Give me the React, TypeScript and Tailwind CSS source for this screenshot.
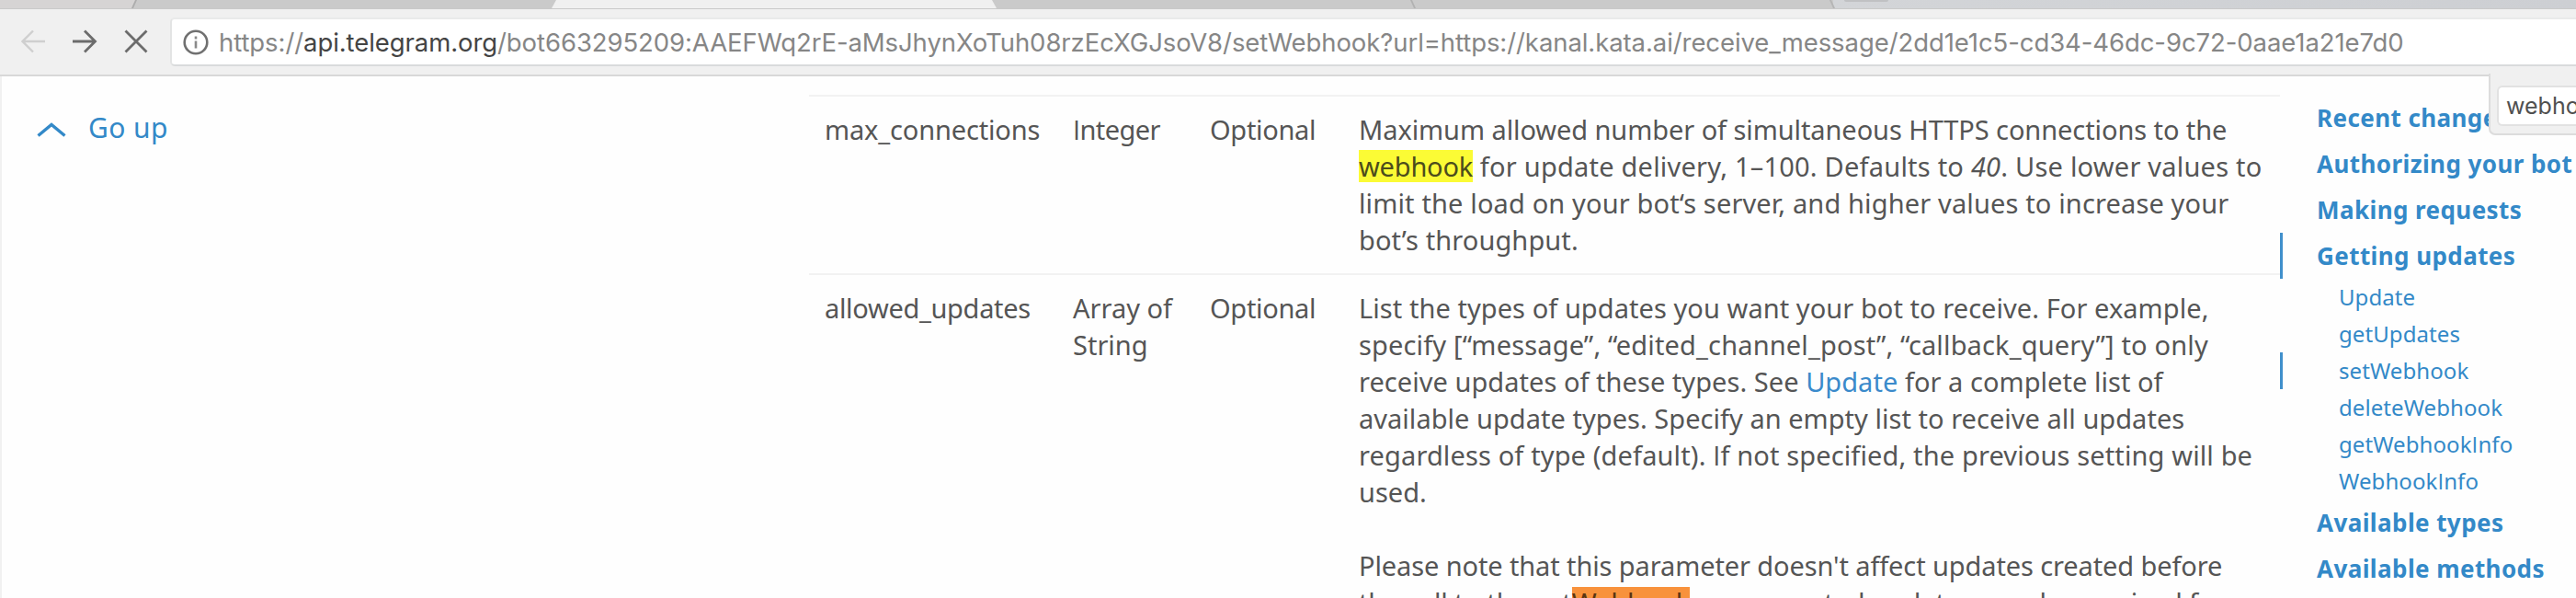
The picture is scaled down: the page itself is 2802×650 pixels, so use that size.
import React from "react";

const I = () => <span className="font-['Open_Sans',sans-serif]">I</span>;

function TabStrip() {
  return (
    <div className="flex h-[9px] shrink-0 bg-[#cacaca]">
      <div className="w-[148px] bg-[#d6d4d4] [clip-path:polygon(0_0,100%_0,144px_100%,0_100%)]" />
      <div className="-ml-[3px] w-[2px] -skew-x-[24deg] bg-[#adadad]" />
      <div className="w-[453px]" />
      <div className="w-[484px] bg-[#f0f0f0] [clip-path:polygon(5px_0,479px_0,100%_100%,0_100%)]" />
      <div className="w-[452px]" />
      <div className="w-[2px] skew-x-[24deg] bg-[#b2b2b2]" />
      <div className="w-[454px]" />
      <div className="w-[2px] skew-x-[24deg] bg-[#b5b5b5]" />
      <div className="flex flex-1 bg-linear-to-r from-[#d3d5d8] to-[#cdcfd3] pl-[12px]">
        <div className="h-[2px] w-[48px] rounded-b bg-[#c0c1c3]" />
      </div>
    </div>
  );
}

function Toolbar() {
  return (
    <div className="flex h-[74px] shrink-0 items-start border-t border-b-2 border-t-[#c9c9c9] border-b-[#d8d8d8] bg-[#f0f0f0]">
      <div className="flex w-[185px] items-center pt-[22px] pl-[22px]">
        <svg width="28" height="26" viewBox="0 0 28 26" fill="none" stroke="#cfcfcf" strokeWidth="2.4">
          <path d="M27 13H3M14 1.5 2.5 13 14 24.5" />
        </svg>
        <svg className="ml-[28px]" width="28" height="26" viewBox="0 0 28 26" fill="none" stroke="#6c6c6c" strokeWidth="2.8">
          <path d="M1 13H25M14 1.5 25.5 13 14 24.5" />
        </svg>
        <svg className="ml-[29px]" width="26" height="26" viewBox="0 0 26 26" fill="none" stroke="#6c6c6c" strokeWidth="2.8">
          <path d="M1.5 1.5 24.5 24.5M24.5 1.5 1.5 24.5" />
        </svg>
      </div>
      <div className="mt-[9px] flex h-[53px] flex-1 items-center rounded-l-[5px] border-y-2 border-l-2 border-t-[#e9eaea] border-b-[#d9dbdc] border-l-[#e3e4e4] bg-white pl-[12px]">
        <svg width="28" height="28" viewBox="0 0 28 28" fill="none" stroke="#707070" strokeWidth="2.6">
          <circle cx="14" cy="14" r="12.3" />
          <path d="M14 12.5V20.5M14 7.5V10.5" stroke="#8a8a8a" />
        </svg>
        <div className="ml-[11px] font-['Inter',sans-serif] text-[27.5px] leading-[40px] tracking-[-0.08px] whitespace-nowrap text-[#868686]">
          https://<span className="text-[#444]">api.telegram.org</span>
          /bot663295209:AAEFWq2rE-aMsJhynXoTuh08rzEcXGJsoV8/setWebhook?url=https://kanal.kata.ai/receive_message/2dd1e1c5-cd34-46dc-9c72-0aae1a21e7d0
        </div>
      </div>
    </div>
  );
}

function FindBar() {
  return (
    <div className="absolute top-[80px] right-0 h-[67px] w-[95px] rounded-bl-[7px] border-b-2 border-l-2 border-[#dcdcdc] bg-[#f0f0f0] pt-[13px] pl-[7px]">
      <div className="h-[44px] overflow-hidden rounded-l-[6px] border-y-2 border-l-2 border-[#e2e2e2] bg-white pl-[8px] font-['Inter',sans-serif] text-[25px] leading-[41px] whitespace-nowrap text-[#505050]">
        webhook
      </div>
    </div>
  );
}

function ParamRow({ name, type, children }: { name: React.ReactNode; type: React.ReactNode; children: React.ReactNode }) {
  return (
    <div className="flex border-t-2 border-[#f2f2f2] pt-[16px] pb-[16px] pl-[17px]">
      <div className="w-[270px]">{name}</div>
      <div className="w-[149px]">{type}</div>
      <div className="w-[162px] tracking-[-0.3px]">Optional</div>
      <div className="whitespace-nowrap">{children}</div>
    </div>
  );
}

function Params() {
  return (
    <div className="mt-[20px] w-[1600px] shrink-0 text-[29px] leading-[40px] text-[#555]">
      <ParamRow
        name={<span className="tracking-[-0.15px]">max_connections</span>}
        type={<span className="tracking-[-0.6px]"><I />nteger</span>}
      >
        <div className="tracking-[-0.08px]">Maximum allowed number of simultaneous HTTPS connections to the</div>
        <div className="tracking-[0.22px]">
          <mark className="mt-[2px] inline-block h-[35px] bg-[#fbfb35] align-top leading-[36px] tracking-[-0.2px] text-[#4c4c1c]">webhook</mark> for update delivery, 1–100. Defaults to <em>40</em>. Use lower values to
        </div>
        <div className="tracking-[0.14px]">limit the load on your bot‘s server, and higher values to increase your</div>
        <div className="tracking-[0.1px]">bot’s throughput.</div>
      </ParamRow>
      <ParamRow
        name={<span className="tracking-[-0.32px]">allowed_updates</span>}
        type={<>Array of<br />String</>}
      >
        <div className="tracking-[0.06px]">List the types of updates you want your bot to receive. For example,</div>
        <div className="tracking-[0.15px]">specify [“message”, “edited_channel_post”, “callback_query”] to only</div>
        <div className="tracking-[0.04px]">receive updates of these types. See <a className="text-[#3a8acb]">Update</a> for a complete list of</div>
        <div className="tracking-[0.03px]">available update types. Specify an empty list to receive all updates</div>
        <div className="tracking-[0.13px]">regardless of type (default). <I />f not specified, the previous setting will be</div>
        <div>used.</div>
        <div className="mt-[40px] tracking-[-0.11px]">Please note that this parameter doesn't affect updates created before</div>
        <div className="tracking-[-0.1px]">
          the call to the set<mark className="mt-[3px] inline-block h-[35px] bg-[#f8923c] align-top leading-[34px] text-[#5a3512]">Webhook</mark>, so unwanted updates may be received for a
        </div>
      </ParamRow>
    </div>
  );
}

type Entry = { label: React.ReactNode; sub?: boolean; active?: boolean };

const entries: Entry[] = [
  { label: "Recent changes" },
  { label: "Authorizing your bot" },
  { label: "Making requests" },
  { label: "Getting updates", active: true },
  { label: "Update", sub: true },
  { label: "getUpdates", sub: true },
  { label: "setWebhook", sub: true, active: true },
  { label: "deleteWebhook", sub: true },
  { label: <>getWebhook<I />nfo</>, sub: true },
  { label: <>Webhook<I />nfo</>, sub: true },
  { label: "Available types" },
  { label: "Available methods" },
];

function SideNav() {
  return (
    <ul className="mt-[20px] w-[321px] shrink-0 whitespace-nowrap text-[#3389c8]">
      {entries.map((e, i) => (
        <li
          key={i}
          className={`border-l-[3px] ${e.active ? "border-[#4090cc]" : "border-transparent"} ${
            e.sub ? "h-[40px] pl-[61px] text-[24px] leading-[40px] tracking-[0.08px]" : "h-[50px] pl-[37px] text-[26px] leading-[50px] font-bold tracking-[0.42px]"
          }`}
        >
          {e.label}
        </li>
      ))}
    </ul>
  );
}

export default function App() {
  return (
    <div className="relative flex h-[650px] w-[2802px] flex-col overflow-hidden bg-[#fefefe] font-['Noto_Sans','Open_Sans',sans-serif]">
      <TabStrip />
      <Toolbar />
      <div className="flex min-h-0 flex-1 border-l-2 border-[#f1f1f1]">
        <div className="flex w-[878px] shrink-0 items-start pt-[36px] pl-[38px] text-[#3389c8]">
          <svg className="mt-[14px]" width="32" height="17" viewBox="0 0 32 17" fill="none" stroke="currentColor" strokeWidth="3.4">
            <path d="M1.5 14.5 16 2.5 30.5 14.5" />
          </svg>
          <span className="ml-[24px] text-[30px] leading-[40px] tracking-[0.4px]">Go up</span>
        </div>
        <Params />
        <SideNav />
      </div>
      <FindBar />
    </div>
  );
}
